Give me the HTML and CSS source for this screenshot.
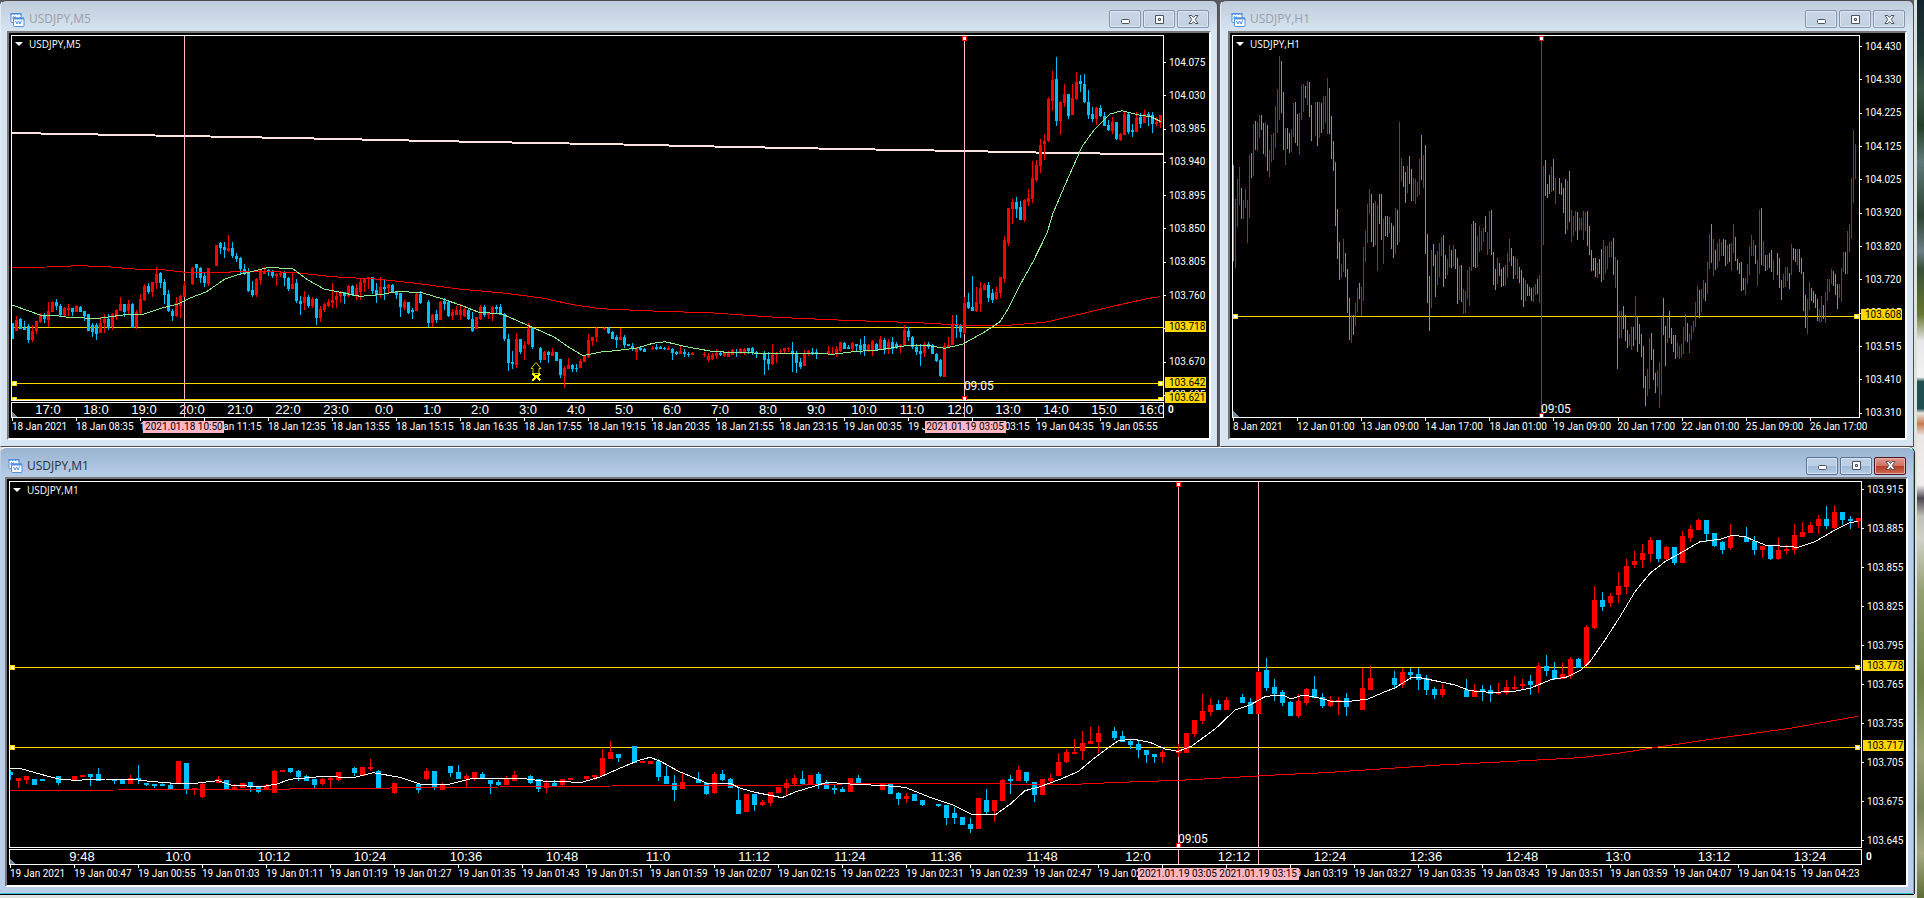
FILE: index.html
```html
<!DOCTYPE html>
<html lang="en">
<head>
<meta charset="utf-8">
<title>USDJPY charts</title>
<link rel="stylesheet" href="styles.css">
</head>
<body>
<svg class="defs" aria-hidden="true">
  <symbol id="icon-chart" viewBox="0 0 15 15">
    <rect x="1" y="1.500" width="10" height="9" rx="1" fill="#fff" stroke="#4d8fe0"/>
    <path d="M0.500 2h11" stroke="#4d8fe0" stroke-width="2" stroke-dasharray="2 1"/>
    <path d="M2.500 6.500l1-2 1 2 1-2" fill="none" stroke="#4d8fe0"/>
    <rect x="3.500" y="6" width="10.500" height="8.500" rx="1" fill="#fff" stroke="#4d8fe0"/>
    <path d="M3.500 6.500h10.500" stroke="#4d8fe0" stroke-width="2"/>
    <path d="M5.500 9l1.500 3 1.500-3 1.500 3 1.500-3.500" fill="none" stroke="#4d8fe0"/>
  </symbol>
  <symbol id="icon-min" viewBox="0 0 13 11">
    <rect x="2.500" y="5.500" width="8" height="4" rx="1" fill="#fff" stroke="#4c5364"/>
  </symbol>
  <symbol id="icon-max" viewBox="0 0 13 11">
    <path fill-rule="evenodd" d="M2.500 1.500h8v8h-8zM5.500 4.500h2v2h-2z" fill="#fff" stroke="#4c5364"/>
  </symbol>
  <symbol id="icon-close" viewBox="0 0 13 11">
    <path d="M2 1.500h2.800l1.700 2 1.700-2h2.800l-2.800 4 2.800 4h-2.800l-1.700-2-1.700 2h-2.800l2.800-4z" fill="#fff" stroke="#4c5364"/>
  </symbol>
</svg>

<main class="desk">
  <div class="row">
    <section class="win">
      <header class="bar">
        <svg class="logo"><use href="#icon-chart"/></svg>
        <h2 class="name">USDJPY,M5</h2>
        <button class="ctl" aria-label="Minimize"><svg><use href="#icon-min"/></svg></button>
        <button class="ctl" aria-label="Maximize"><svg><use href="#icon-max"/></svg></button>
        <button class="ctl" aria-label="Close"><svg><use href="#icon-close"/></svg></button>
      </header>
      <div class="client">
        <div class="plot"><svg class="draw" id="m5"></svg><span class="legend">USDJPY,M5</span><span class="mark" style="left:82.700%">09:05</span></div>
        <div class="prices prices-m5">
          <span>104.075</span><span>104.030</span><span>103.985</span><span>103.940</span><span>103.895</span><span>103.850</span><span>103.805</span><span>103.760</span><span>103.715</span><span>103.670</span><span>103.625</span>
        </div>
        <div class="tags"><b style="top:79.800%">103.718</b><b style="top:95%">103.642</b><b style="top:99.300%">103.621</b></div>
        <div class="sub">
          <div class="hours hours-m5"><span>17:0</span><span>18:0</span><span>19:0</span><span>20:0</span><span>21:0</span><span>22:0</span><span>23:0</span><span>0:0</span><span>1:0</span><span>2:0</span><span>3:0</span><span>4:0</span><span>5:0</span><span>6:0</span><span>7:0</span><span>8:0</span><span>9:0</span><span>10:0</span><span>11:0</span><span>12:0</span><span>13:0</span><span>14:0</span><span>15:0</span><span>16:0</span></div>
          <i class="cut" style="left:14.950%"></i><i class="cut" style="left:82.720%"></i>
        </div>
        <div class="zero">0</div>
        <div class="times">
          <div class="dates dates-m5"><span>18 Jan 2021</span><span>18 Jan 08:35</span><span>18 Jan 09:55</span><span>18 Jan 11:15</span><span>18 Jan 12:35</span><span>18 Jan 13:55</span><span>18 Jan 15:15</span><span>18 Jan 16:35</span><span>18 Jan 17:55</span><span>18 Jan 19:15</span><span>18 Jan 20:35</span><span>18 Jan 21:55</span><span>18 Jan 23:15</span><span>19 Jan 00:35</span><span>19 Jan 01:55</span><span>19 Jan 03:15</span><span>19 Jan 04:35</span><span>19 Jan 05:55</span></div>
          <b class="stamp" style="left:14.950%">2021.01.18 10:50</b><b class="stamp" style="left:82.700%">2021.01.19 03:05</b>
        </div>
      </div>
    </section>

    <section class="win">
      <header class="bar">
        <svg class="logo"><use href="#icon-chart"/></svg>
        <h2 class="name">USDJPY,H1</h2>
        <button class="ctl" aria-label="Minimize"><svg><use href="#icon-min"/></svg></button>
        <button class="ctl" aria-label="Maximize"><svg><use href="#icon-max"/></svg></button>
        <button class="ctl" aria-label="Close"><svg><use href="#icon-close"/></svg></button>
      </header>
      <div class="client single">
        <div class="plot"><svg class="draw" id="h1"></svg><span class="legend">USDJPY,H1</span><span class="mark low" style="left:49.200%">09:05</span></div>
        <div class="prices prices-h1">
          <span>104.430</span><span>104.330</span><span>104.225</span><span>104.125</span><span>104.025</span><span>103.920</span><span>103.820</span><span>103.720</span><span>103.615</span><span>103.515</span><span>103.410</span><span>103.310</span>
        </div>
        <div class="tags"><b style="top:73.200%">103.608</b></div>
        <div class="times">
          <div class="dates dates-h1"><span>8 Jan 2021</span><span>12 Jan 01:00</span><span>13 Jan 09:00</span><span>14 Jan 17:00</span><span>18 Jan 01:00</span><span>19 Jan 09:00</span><span>20 Jan 17:00</span><span>22 Jan 01:00</span><span>25 Jan 09:00</span><span>26 Jan 17:00</span></div>
        </div>
      </div>
    </section>
  </div>

  <section class="win active">
    <header class="bar">
      <svg class="logo"><use href="#icon-chart"/></svg>
      <h2 class="name">USDJPY,M1</h2>
      <button class="ctl" aria-label="Minimize"><svg><use href="#icon-min"/></svg></button>
      <button class="ctl" aria-label="Maximize"><svg><use href="#icon-max"/></svg></button>
      <button class="ctl quit" aria-label="Close"><svg><use href="#icon-close"/></svg></button>
    </header>
    <div class="client">
      <div class="plot"><svg class="draw" id="m1"></svg><span class="legend">USDJPY,M1</span><span class="mark low" style="left:63.100%">09:05</span></div>
      <div class="prices prices-m1">
        <span>103.915</span><span>103.885</span><span>103.855</span><span>103.825</span><span>103.795</span><span>103.765</span><span>103.735</span><span>103.705</span><span>103.675</span><span>103.645</span>
      </div>
      <div class="tags"><b style="top:50.500%">103.778</b><b style="top:72.300%">103.717</b></div>
      <div class="sub">
        <div class="hours hours-m1"><span>9:48</span><span>10:0</span><span>10:12</span><span>10:24</span><span>10:36</span><span>10:48</span><span>11:0</span><span>11:12</span><span>11:24</span><span>11:36</span><span>11:48</span><span>12:0</span><span>12:12</span><span>12:24</span><span>12:36</span><span>12:48</span><span>13:0</span><span>13:12</span><span>13:24</span></div>
        <i class="cut" style="left:63.100%"></i><i class="cut" style="left:67.420%"></i>
      </div>
      <div class="zero">0</div>
      <div class="times">
        <div class="dates dates-m1"><span>19 Jan 2021</span><span>19 Jan 00:47</span><span>19 Jan 00:55</span><span>19 Jan 01:03</span><span>19 Jan 01:11</span><span>19 Jan 01:19</span><span>19 Jan 01:27</span><span>19 Jan 01:35</span><span>19 Jan 01:43</span><span>19 Jan 01:51</span><span>19 Jan 01:59</span><span>19 Jan 02:07</span><span>19 Jan 02:15</span><span>19 Jan 02:23</span><span>19 Jan 02:31</span><span>19 Jan 02:39</span><span>19 Jan 02:47</span><span>19 Jan 02:55</span><span>19 Jan 03:03</span><span>19 Jan 03:11</span><span>19 Jan 03:19</span><span>19 Jan 03:27</span><span>19 Jan 03:35</span><span>19 Jan 03:43</span><span>19 Jan 03:51</span><span>19 Jan 03:59</span><span>19 Jan 04:07</span><span>19 Jan 04:15</span><span>19 Jan 04:23</span></div>
        <b class="stamp" style="left:63.100%">2021.01.19 03:05</b><b class="stamp" style="left:67.420%">2021.01.19 03:15</b>
      </div>
    </div>
  </section>
</main>
<div class="photo"></div>
<script src="charts.js"></script>
</body>
</html>
```

FILE: styles.css
```css
* { box-sizing: border-box; }

body {
  margin: 0;
  min-height: 100vh;
  display: grid;
  grid-template-columns: 1fr 10px;
  background: #dfe3e0;
  font-family: Roboto, "Liberation Sans", sans-serif;
  font-size: 10px;
  overflow: hidden;
}

.defs { position: absolute; width: 0; height: 0; }

.desk {
  display: grid;
  grid-template-rows: 447fr 448fr;
  padding-bottom: 3px;
  min-width: 0;
}

.row {
  display: grid;
  grid-template-columns: 1218fr 694fr;
  gap: 2px;
  background: #5a5a60;
  min-width: 0;
}

/* Windows */
.win {
  display: grid;
  grid-template-rows: 30px 1fr;
  min-width: 0;
  padding: 0 6px 6px;
  border: 1px solid #4b4b50;
  border-left-color: #e4edf6;
  border-radius: 6px 6px 0 0;
  background: linear-gradient(#bfccdb, #d7e4f1 31px) #d7e4f1;
}

.win + .win { padding-left: 7px; }

.win.active {
  grid-template-rows: 29px 1fr;
  padding: 0 5px 6px 4px;
  border-color: #fff #35c3dc #35c3dc #b9cfe9;
  background: linear-gradient(#99b3d0, #b9cfe9 31px);
  box-shadow: 0 1px 0 #000, 1px 0 0 #222;
  margin-bottom: 1px;
}

.bar {
  display: flex;
  align-items: center;
  gap: 2px;
  padding: 6px 2px 0 3px;
}

.logo { width: 15px; height: 15px; }

.name {
  flex: 1;
  margin: 0 0 0 2px;
  font: 12px/16px "Open Sans", sans-serif;
  color: #9aa0a8;
}

.active .name { color: #26303c; }

.ctl {
  width: 32px;
  height: 18px;
  padding: 0;
  display: grid;
  place-items: center;
  border: 1px solid #8595ae;
  border-radius: 2px;
  background: linear-gradient(#c9d6e5, #c2d0e1);
  box-shadow: inset 0 0 0 1px #dbe6f2;
}

.ctl svg { width: 13px; height: 11px; }

.active .ctl {
  border-color: #5c708f;
  background: linear-gradient(#bccfe5 50%, #9fb9d6 50%, #b4cbe4);
  box-shadow: inset 0 0 0 1px #d5e3f2;
}

.active .quit {
  border-color: #4a1520;
  background: linear-gradient(#e0998f, #cf6f62 50%, #b63a26 50%, #cf6a50);
  box-shadow: inset 0 0 0 1px #e8ada3;
}

/* Chart area */
.client {
  display: grid;
  grid-template-columns: minmax(0, 1fr) 45px;
  grid-template-rows: minmax(0, 1fr) 17px 20px;
  padding: 2px 0 0 2px;
  border: 2px solid;
  border-color: #77777a #fff #fff #77777a;
  background: #000;
  color: #fff;
  overflow: hidden;
}

.client.single { grid-template-rows: minmax(0, 1fr) 20px; }

.active .client { grid-template-columns: minmax(0, 1fr) 44px; }

.plot {
  position: relative;
  border: 1px solid #fff;
  overflow: hidden;
}

.draw {
  position: absolute;
  inset: 0;
  width: 100%;
  height: 100%;
}

.legend {
  position: absolute;
  left: 3px;
  top: 0;
  display: flex;
  align-items: center;
  gap: 6px;
  font: 10px/16px "Open Sans", sans-serif;
}

.legend::before {
  content: "";
  border: 4px solid transparent;
  border-top-color: #fff;
  border-bottom: 0;
}

.mark {
  position: absolute;
  bottom: 6px;
  font: 12px/16px Roboto, sans-serif;
}

.mark.low { bottom: 0; }

.prices, .tags {
  grid-column: 2;
  grid-row: 1;
}

.prices {
  display: grid;
  grid-auto-rows: 1fr;
  align-items: center;
  line-height: 12px;
}

.prices-m5 { padding-top: 11px; margin-bottom: -11px; }
.prices-h1 { margin-top: -5px; margin-bottom: -12px; }
.prices-m1 { margin-top: -11px; margin-bottom: -12px; }

.prices span {
  display: flex;
  align-items: center;
  gap: 3px;
}

.prices span::before {
  content: "";
  width: 2px;
  height: 1px;
  background: #fff;
}

.tags { position: relative; }

.tags b {
  position: absolute;
  left: 1px;
  width: 41px;
  margin-top: -6px;
  padding-left: 4px;
  background: #ffd700;
  color: #000;
  font-weight: 400;
  line-height: 11px;
}

.sub {
  position: relative;
  margin-top: 1px;
  border: 1px solid #fff;
  overflow: hidden;
  font: 13px/14px "Liberation Sans", sans-serif;
  background: linear-gradient(45deg, #778899 4px, #000 4px);
}

.hours {
  display: grid;
  grid-auto-flow: column;
  grid-auto-columns: 1fr;
  text-align: center;
}

.hours-m5 { padding-left: 12px; margin-right: -13px; }
.hours-m1 { padding-left: 24px; padding-right: 3px; }

.cut {
  position: absolute;
  top: 0;
  bottom: 0;
  width: 1px;
  background: #ffb6c1;
}

.zero { padding-left: 4px; line-height: 18px; font-weight: 700; }

.times {
  position: relative;
  grid-column: 1 / -1;
  margin-right: 45px;
  padding-left: 1px;
}

.dates {
  display: grid;
  grid-auto-flow: column;
  grid-auto-columns: minmax(0, 1fr);
  line-height: 12px;
  white-space: nowrap;
}

.dates-h1 { margin-right: -14px; }
.dates-m1 { margin-right: -5px; }

.dates span::before {
  content: "";
  display: block;
  width: 1px;
  height: 3px;
  background: #fff;
}

.stamp {
  position: absolute;
  top: 3px;
  width: 81px;
  margin-left: -40px;
  background: #ffb6c1;
  color: #000;
  font-weight: 400;
  line-height: 12px;
  text-align: center;
  white-space: nowrap;
}

/* Strip of wallpaper beside the windows */
.photo {
  margin-left: 3px;
  background: linear-gradient(#12242c 0, #1f3a34 6%, #3d5a4a 10%, #24402a 14%, #5e7a78 18%, #2c4534 24%, #6c7f86 28%, #39503a 30%, #66782e 35%, #e8e8ea 38%, #f2f2f2 42%, #1f4f50 42.500%, #1f4f50 45.500%, #e8e4e0 46%, #c97a50 47.200%, #e9e6e6 48.500%, #f0eeee 54%, #4c4850 55.500%, #bfc0ba 57.500%, #d0d2c8 60%, #93a070 66%, #6f8448 76%, #98a377 84%, #788559 90%, #a4a982 95%, #5d6d34);
}
```

FILE: charts.js
```js
// Vertical values are counted in thirds of a pixel row from the top of the pane's window.
const M5 = "b968,968,1017,1017 r949,960,992,992 b955,957,987,987 b963,985,990,990 b972,978,1020,1029 r975,993,1020,1026 r963,963,993,1002 r939,942,966,968 b939,945,958,970 r906,933,960,980 r903,906,936,936 b897,906,918,930 b912,918,945,948 r921,924,945,948 r912,924,930,948 b924,924,936,949 r915,918,936,936 b918,920,936,936 b933,933,948,963 b942,942,993,993 b969,975,996,1011 b969,975,1002,1020 r951,969,998,998 r942,957,969,1000 b942,957,984,990 r939,942,982,990 r927,929,945,961 r891,912,933,933 b911,911,936,951 r900,912,934,945 b909,912,984,984 r930,936,982,987 r882,897,939,942 r852,858,900,903 b849,857,876,882 r846,846,876,891 r801,822,849,867 b816,819,849,864 b837,845,884,912 b870,881,933,936 b927,933,948,963 r891,909,948,951 r885,888,918,953 r843,855,891,891 - r801,804,852,855 b792,793,804,834 b801,804,833,849 b816,829,849,861 r804,804,852,857 - r735,735,797,797 b726,729,744,763 b726,741,750,774 r705,744,753,755 b726,744,768,774 b759,768,776,786 b771,774,808,824 b791,807,822,825 b804,816,874,876 b843,870,885,891 r834,837,885,891 r807,810,840,855 r801,813,822,822 b807,810,817,828 b809,813,827,834 r819,822,828,858 r812,818,825,831 b813,819,834,858 b831,833,867,873 r819,852,867,867 b837,849,903,909 b888,902,912,945 r873,891,909,930 b885,891,918,924 r891,897,918,924 b894,897,954,975 r918,927,954,966 r909,911,930,936 r897,906,918,921 r849,900,909,924 r876,888,900,924 r872,876,888,909 b876,876,888,912 r855,858,887,890 b854,857,885,888 r852,864,887,900 r837,846,876,900 r834,837,849,875 r831,831,837,867 b831,831,873,882 b849,870,885,909 r832,861,885,894 b840,861,867,900 r851,855,863,879 b852,854,876,879 b873,876,884,897 b879,879,921,951 r900,906,924,930 b906,906,939,943 b924,931,936,958 r876,882,933,933 b873,882,909,912 - b900,906,969,981 r942,945,970,981 b930,942,960,969 r903,906,960,960 b894,903,912,930 b900,906,948,951 r927,936,948,960 r918,930,945,945 r912,930,945,960 r924,927,948,951 b924,930,957,961 b936,957,993,996 r950,952,988,988 r915,921,957,960 b915,921,946,950 r936,939,945,957 r918,920,942,962 b915,921,927,940 b912,921,945,945 b940,943,1018,1022 b1002,1017,1089,1112 b1053,1087,1093,1107 r1000,1017,1096,1103 b1017,1017,1056,1062 r1023,1035,1048,1080 r969,988,1032,1035 b981,984,1042,1046 - b1041,1045,1080,1089 r1053,1056,1079,1080 b1053,1055,1065,1089 r1044,1056,1067,1068 b1056,1057,1083,1083 b1077,1077,1125,1134 r1098,1104,1128,1163 r1074,1095,1106,1106 b1092,1095,1106,1116 b1092,1104,1107,1116 r1077,1083,1104,1104 r1068,1069,1086,1086 r1002,1020,1070,1073 r1011,1011,1023,1037 r982,983,1011,1026 - r982,984,988,990 b982,984,999,1003 b993,996,1017,1017 b1005,1011,1020,1044 r984,1011,1020,1020 b1005,1011,1035,1045 b1032,1032,1038,1038 b1029,1038,1047,1053 r1041,1044,1056,1080 b1038,1044,1049,1053 b1045,1047,1055,1055 - r1038,1044,1047,1050 b1032,1041,1046,1050 b1038,1041,1046,1047 b1042,1043,1047,1050 r1038,1044,1050,1050 b1044,1047,1058,1080 b1053,1056,1062,1064 r1035,1053,1062,1062 b1046,1056,1062,1070 b1056,1063,1066,1071 r1055,1060,1065,1066 - - r1056,1061,1065,1071 r1059,1068,1080,1086 r1059,1065,1077,1080 r1047,1058,1068,1077 b1054,1059,1064,1068 r1056,1058,1068,1071 r1053,1059,1070,1071 r1047,1050,1064,1065 b1046,1055,1057,1070 r1044,1048,1059,1062 r1044,1047,1055,1064 b1043,1045,1053,1063 b1041,1045,1059,1065 b1053,1055,1058,1073 - b1053,1059,1079,1125 b1056,1077,1092,1110 r1032,1065,1092,1095 r1056,1058,1064,1090 r1048,1052,1056,1062 r1043,1045,1054,1058 r1041,1043,1048,1056 b1026,1053,1060,1116 b1053,1060,1089,1119 b1074,1086,1101,1107 r1050,1058,1098,1098 r1049,1052,1062,1068 b1043,1055,1059,1064 b1046,1056,1060,1078 - - r1038,1052,1063,1064 r1041,1058,1064,1065 r1038,1048,1062,1070 r1025,1026,1053,1055 b1026,1028,1048,1048 b1035,1041,1047,1047 r1026,1030,1047,1053 b1031,1033,1037,1052 b1017,1034,1049,1062 b1008,1033,1052,1068 r1032,1036,1053,1056 r1021,1023,1050,1068 b1029,1032,1050,1053 r1008,1017,1047,1047 b1014,1019,1050,1061 r1017,1027,1047,1062 b1011,1027,1047,1062 b1026,1032,1044,1048 r1032,1034,1041,1058 r975,991,1038,1038 b981,992,1010,1022 b1008,1010,1041,1048 b1033,1040,1055,1064 b1032,1053,1062,1098 r1026,1031,1058,1070 b1025,1032,1042,1047 b1032,1035,1062,1062 b1059,1063,1083,1087 b1077,1080,1128,1132 r1029,1038,1132,1132 r1011,1035,1041,1041 r945,972,1035,1035 b945,972,978,1013 b972,978,996,1014 r891,909,999,1003 b879,906,924,927 b828,921,933,933 r861,906,933,936 r846,864,912,936 r849,855,870,870 b846,855,893,906 b867,880,899,909 r861,876,897,900 r831,831,879,894 r708,720,837,849 r624,624,730,738 r597,606,627,672 b591,606,627,654 b603,621,660,660 r597,600,660,666 r567,594,606,618 r483,534,597,609 r480,495,540,546 r417,435,498,519 r402,423,432,480 r291,297,423,426 r213,240,303,333 b171,237,363,378 r303,306,363,405 r252,282,309,321 b282,282,348,357 r252,294,345,345 r216,246,297,300 b225,243,252,276 b222,252,306,309 b270,306,345,357 b321,342,357,366 r321,324,357,375 b315,324,348,351 b336,348,378,378 b360,375,390,393 r351,366,393,402 b366,366,417,420 r399,402,419,423 r334,342,405,405 b339,342,396,402 b372,390,396,411 r336,354,396,396 b339,351,372,384 r330,342,369,369 b336,342,351,378 b336,345,372,399 r351,366,372,378 r345,345,369,384";

const H1 = "b495,783 r597,804 r537,681 r501,615 b564,657 r600,657 r567,624 r600,729 r465,654 b459,534 r372,528 b363,450 r366,453 r345,414 b345,390 b369,462 r366,471 b375,513 r450,531 r405,486 r399,480 r318,444 r267,399 r168,360 b183,339 b276,450 r384,495 b384,447 b399,459 r387,456 r309,411 b306,429 b342,438 r339,465 r255,360 r252,336 b258,294 r243,315 b246,351 b315,423 - r306,408 b306,438 r306,414 b309,399 r288,387 r288,369 r234,402 b264,402 b348,477 b423,513 b486,678 b627,777 b726,840 r792,834 r717,816 b759,831 b807,939 b894,1020 r945,1029 b945,1005 r909,978 r864,936 b849,897 r861,948 r741,903 r693,786 r612,729 r567,642 b582,726 b609,741 r603,735 r615,813 b582,672 b582,720 r657,792 b648,708 b648,711 r651,699 b669,747 b678,774 r624,762 b630,735 r366,726 r474,543 b498,561 b516,609 r498,579 b468,552 b507,603 r534,603 r537,612 r546,591 r477,585 b405,540 r465,564 b435,762 b702,909 b828,993 r750,924 b732,798 b765,891 r753,855 r729,831 r711,768 b705,861 b765,837 r777,825 r735,801 b750,804 r735,798 b747,807 b774,912 r798,900 b795,906 r867,942 r873,939 r810,897 r801,918 r672,813 b663,801 b669,804 r708,801 r678,756 r693,750 r684,726 b648,696 r696,765 r633,747 b630,765 b756,855 b807,870 r774,852 b789,828 b807,861 b801,858 r795,858 r759,834 r717,786 b744,798 b768,837 r771,825 r777,837 b801,849 b810,900 b834,921 r840,903 b852,888 b861,888 b864,903 r861,906 r852,885 b837,882 r825,909 - r498,735 b480,588 b552,594 b525,582 r501,576 b477,573 r534,612 - b534,582 b549,585 b564,639 b537,702 r543,690 b513,666 r630,726 r648,708 r633,693 b636,720 r654,690 r654,690 r633,720 r636,693 b633,738 b678,765 b750,813 b774,813 b774,831 r789,834 b777,822 b747,846 r720,840 r738,819 r738,807 r726,771 r723,771 b714,825 r771,864 b780,1107 r933,1014 r933,1014 b918,987 b945,1023 b990,1044 r1002,1038 r981,1050 b981,1038 r888,1020 b948,1056 b972,1032 b1002,1071 b1038,1164 b1128,1218 r1107,1188 r1014,1167 b999,1080 b1047,1140 b1119,1179 r1110,1161 r1086,1224 r954,1185 b894,1005 b978,1098 r954,1029 b933,1014 b984,1032 b1005,1056 b1005,1077 r1029,1071 r1038,1077 r1032,1071 r981,1062 r942,1023 b969,1026 r1002,1059 r978,1020 r963,996 r906,981 r858,939 b870,954 r867,936 r840,897 b849,903 r786,882 r702,807 b672,789 r717,828 b750,810 r729,804 r717,783 r726,768 b717,768 b720,798 r735,792 b732,786 r729,813 r672,759 b711,783 b777,810 b789,822 b786,873 b834,870 r834,885 r792,852 r741,825 r705,768 r720,768 b735,792 r780,858 r630,822 b624,795 r723,798 b765,813 r765,810 b759,804 b750,816 r780,840 - b759,825 b774,864 b840,900 r822,864 r801,861 r801,843 b819,867 r732,825 b744,780 b747,786 r747,795 b747,816 b774,822 b816,933 b885,984 r897,1002 r846,930 b864,903 b873,909 b882,924 b897,963 r927,966 r888,966 b915,957 r876,969 r837,903 r837,876 r807,852 b813,858 b822,885 b852,927 r852,894 r804,906 r756,816 b756,822 r693,822 r672,756 r534,717 r390,609 r432,537";

const M1 = "b989,996,1005,1020 r1014,1014,1023,1044 r1008,1008,1021,1033 b1017,1017,1035,1035 b1017,1017,1023,1023 - b1008,1008,1029,1035 - r1008,1008,1020,1023 r1005,1005,1011,1011 b1002,1002,1011,1038 b984,1002,1023,1023 - b1017,1017,1023,1032 b1020,1020,1032,1032 r1005,1014,1032,1032 b975,1014,1020,1032 b1029,1029,1035,1038 b1032,1032,1038,1044 b1029,1032,1038,1038 b1026,1035,1047,1047 r963,963,1029,1029 b969,969,1047,1062 r1044,1044,1050,1065 r1030,1032,1071,1074 - r1008,1017,1029,1029 b1020,1020,1050,1050 r1032,1041,1047,1047 r1029,1029,1044,1044 b1026,1026,1038,1056 b1041,1041,1056,1059 r1032,1035,1047,1050 r990,993,1059,1059 r990,990,996,996 b984,984,996,999 b990,993,1011,1023 b1005,1008,1023,1023 b1017,1017,1035,1044 r1014,1017,1032,1035 r1008,1014,1020,1045 r996,996,1020,1023 - b981,984,999,1008 r981,981,1008,1008 r957,981,987,993 b990,993,1047,1047 - r1029,1029,1059,1062 - - b1032,1032,1050,1059 r984,993,1017,1020 b993,993,1044,1050 r1029,1035,1050,1050 b978,978,999,1011 b975,996,1017,1017 r1002,1008,1017,1041 r996,996,1017,1023 b996,1002,1017,1017 b1020,1020,1032,1062 b1020,1026,1035,1038 r1008,1017,1035,1035 r993,1005,1023,1023 - b1005,1008,1029,1032 b1017,1017,1047,1056 r1020,1029,1044,1059 b1020,1029,1038,1038 r1017,1017,1035,1041 r1014,1014,1020,1020 - r1008,1008,1017,1020 r1005,1005,1011,1020 r927,954,1008,1008 r903,936,957,957 b942,942,954,966 - b918,918,969,969 r963,963,969,969 r963,963,972,972 b957,963,1011,1023 b978,1008,1032,1032 b1005,1029,1050,1083 r996,1026,1047,1047 - b996,1017,1029,1029 b1026,1029,1062,1065 r996,1002,1059,1062 b990,1002,1020,1023 b1014,1017,1044,1044 b1041,1080,1122,1122 r1062,1062,1116,1116 b1062,1062,1095,1113 r1080,1086,1095,1098 r1056,1056,1089,1098 r1041,1041,1059,1059 r1017,1029,1044,1068 r1005,1014,1032,1035 b993,1017,1032,1032 r1005,1005,1032,1032 b996,1002,1032,1047 b1020,1029,1047,1047 b1035,1044,1050,1062 b1041,1047,1056,1056 r1014,1014,1056,1056 b1005,1014,1032,1035 - - r1032,1032,1050,1050 b1029,1029,1062,1062 b1056,1059,1077,1095 r1059,1068,1077,1089 b1062,1062,1083,1083 b1080,1080,1095,1098 - b1092,1092,1098,1101 b1095,1095,1134,1155 b1101,1119,1134,1152 b1131,1131,1155,1155 b1134,1152,1167,1179 r1074,1074,1167,1167 b1047,1080,1116,1122 r1080,1080,1113,1146 r1017,1020,1083,1083 b1005,1017,1023,1062 r978,990,1023,1023 b996,996,1023,1029 b1026,1026,1065,1086 r1017,1017,1065,1065 r1002,1014,1023,1032 r939,966,1008,1008 r927,936,966,969 r897,936,942,942 r873,909,933,960 r861,903,912,912 r858,879,906,939 - b861,873,894,900 b873,888,906,906 b897,903,915,927 b903,912,930,954 b930,930,945,969 b942,942,951,969 r930,936,951,969 - r912,930,939,951 r879,879,939,939 r840,840,882,891 r762,813,843,852 r774,795,816,828 b780,792,810,810 r771,780,810,810 - b762,771,789,789 b774,786,822,822 r693,696,822,822 b654,690,744,753 b717,741,762,783 b750,756,789,798 b783,786,828,828 r762,783,828,834 r744,747,789,795 b708,747,774,774 b759,771,798,804 r768,780,798,801 r771,780,786,825 b759,774,801,828 - r684,744,810,810 r678,714,750,750 - - b693,714,735,747 r684,696,735,744 b684,696,705,720 b684,702,720,750 b705,714,750,765 b741,747,765,777 r732,747,765,771 - - b717,750,771,771 r732,750,771,771 b735,747,753,783 b735,750,762,786 r729,756,762,765 r720,741,759,765 r708,741,747,750 r717,732,738,750 b705,723,735,765 r669,678,735,759 b645,678,693,708 b666,690,717,720 r669,702,717,717 r651,657,708,717 b654,657,684,684 r555,561,675,681 r438,480,564,567 b456,480,501,513 r459,468,489,501 r396,438,465,489 r357,378,441,462 r333,363,375,384 r312,339,360,384 r291,300,342,366 b300,300,357,366 r318,321,357,363 b321,321,369,375 r273,288,369,369 r255,267,294,306 r237,240,270,270 b240,240,282,306 b279,279,318,321 b303,306,330,342 r252,288,324,330 - b261,291,306,306 b288,303,330,345 r318,318,330,354 b315,318,357,360 r291,330,357,360 r315,327,333,342 r252,285,330,342 r246,276,291,291 r246,255,279,279 r225,237,258,282 b198,237,258,267 r195,216,264,267 b216,216,240,255 b228,237,243,267 r234,234,243,264";

const NS = "http://www.w3.org/2000/svg";
const RED = "#ff0000", BLUE = "#00bfff", GOLD = "#ffd700", PINK = "#ffb6c1";

function add(svg, tag, attrs) {
  const el = document.createElementNS(NS, tag);
  for (const k in attrs) el.setAttribute(k, attrs[k]);
  svg.appendChild(el);
}
const box = (svg, x, y, w, h, fill) => add(svg, "rect", { x, y, width: w, height: h, fill });

function handle(svg, x, y, color) {
  box(svg, x - 2, y - 2, 5, 5, color);
  box(svg, x - 1, y - 1, 3, 3, "#fff");
}

function curve(svg, stroke, width, text) {
  const points = text.split(" ").map(p => {
    const [x, y] = p.split(",");
    return x + "," + (y / 3).toFixed(1);
  }).join(" ");
  add(svg, "polyline", { points, fill: "none", stroke, "stroke-width": width });
}

function candles(svg, text, x0, step, body) {
  text.split(" ").forEach((bar, i) => {
    if (bar === "-") return;
    const color = bar[0] === "r" ? RED : BLUE;
    const v = bar.slice(1).split(",").map(n => Math.round(n / 3));
    const x = x0 + i * step;
    box(svg, x, v[0], 1, v[v.length - 1] - v[0], color);
    if (body) box(svg, x - (body - 1) / 2, v[1], body, Math.max(1, v[2] - v[1]), color);
  });
}

function pane(id, x, y, w, h) {
  const svg = document.getElementById(id);
  svg.setAttribute("viewBox", [x, y, w, h].join(" "));
  svg.setAttribute("preserveAspectRatio", "none");
  svg.setAttribute("shape-rendering", "crispEdges");
  return svg;
}

// M5
let s = pane("m5", 12, 36, 1151, 364);
curve(s, "#ffe4e1", 2, "12,399 184,408 324,416 432,423 538,429 600,432 737,441 845,447 964,453 1060,459 1163,463");
box(s, 12, 327, 1151, 1, GOLD);
box(s, 12, 383, 1151, 1, GOLD);
box(s, 12, 399, 1151, 1, GOLD);
box(s, 184, 36, 1, 364, PINK);
box(s, 964, 36, 1, 364, PINK);
candles(s, M5, 12, 4, 3);
curve(s, RED, 1, "12,802 47,801 79,797 107,800 134,807 158,808 186,817 221,817 253,814 293,817 332,830 380,838 419,851 459,867 506,880 542,894 573,914 600,926 653,933 714,939 776,952 845,961 918,968 959,975 1012,975 1045,967 1082,941 1114,918 1147,896 1160,890");
curve(s, "#90ee90", 1, "12,915 40,945 59,948 71,953 99,955 130,942 144,942 162,924 178,912 190,894 206,876 225,837 237,825 253,814 269,802 293,807 308,840 324,867 340,877 360,889 380,884 399,874 423,879 443,897 463,918 478,936 502,942 518,963 534,984 554,1011 569,1042 583,1067 601,1056 616,1052 637,1044 653,1030 665,1025 686,1040 714,1055 763,1060 816,1060 833,1063 853,1055 878,1050 906,1037 927,1036 945,1045 963,1032 984,997 1000,965 1008,927 1020,855 1033,785 1047,700 1053,640 1065,555 1082,440 1094,390 1110,342 1122,332 1139,345 1151,350 1161,365");
handle(s, 14, 383, GOLD);
handle(s, 14, 399, GOLD);
handle(s, 1160, 383, GOLD);
handle(s, 1160, 399, GOLD);
handle(s, 964, 38, RED);
handle(s, 964, 398, RED);
add(s, "path", { d: "M536 362.500l-5 6h2v5h6v-5h2z", fill: "none", stroke: "#c8c800", "shape-rendering": "auto" });
add(s, "path", { d: "M532.500 373.500l8 7M540.500 373.500l-8 7M534 376h5", stroke: "#ffff00", "stroke-width": 2 });

// H1
s = pane("h1", 1233, 36, 626, 381);
box(s, 1233, 316, 626, 1, GOLD);
box(s, 1541, 36, 1, 381, RED);
candles(s, H1, 1233, 2, 0);
handle(s, 1235, 316, GOLD);
handle(s, 1856, 316, GOLD);
handle(s, 1541, 38, RED);
handle(s, 1541, 415, RED);
add(s, "path", { d: "M1233 411l6 6h-6z", fill: "#778899" });

// M1
s = pane("m1", 10, 42, 1851, 365);
box(s, 10, 227, 1851, 1, GOLD);
box(s, 10, 307, 1851, 1, GOLD);
box(s, 1178, 42, 1, 365, PINK);
box(s, 1258, 42, 1, 365, PINK);
candles(s, M1, 10, 8, 5);
curve(s, RED, 1, "9,1051 118,1050 120,1048 260,1048 358,1045 500,1041 612,1038 660,1036 790,1036 855,1031 940,1031 1075,1033 1120,1027 1180,1021 1240,1011 1280,1004 1325,998 1400,983 1440,975 1500,966 1580,953 1620,939 1660,920 1725,892 1790,865 1858,829");
curve(s, "#ffffff", 1, "9,985 20,985 37,1000 60,1018 75,1021 105,1017 138,1020 150,1024 173,1030 195,1030 218,1022 232,1036 262,1040 277,1032 290,1018 320,1010 355,1012 373,998 400,1012 420,1032 450,1032 474,1014 500,1017 525,1016 545,1024 582,1027 600,1011 622,982 638,962 650,952 660,963 678,993 708,1031 730,1030 738,1042 752,1055 782,1073 795,1056 815,1038 827,1027 850,1032 885,1037 905,1042 930,1072 952,1094 972,1123 996,1123 1010,1093 1025,1052 1040,1040 1060,1018 1078,995 1092,960 1106,928 1118,903 1132,897 1150,907 1165,927 1178,934 1192,918 1217,862 1235,810 1250,795 1265,770 1275,766 1285,768 1291,777 1303,765 1318,773 1333,785 1352,783 1368,777 1385,755 1395,744 1411,713 1420,713 1440,725 1455,735 1470,752 1490,757 1512,755 1530,745 1552,718 1566,712 1580,692 1590,665 1605,600 1620,530 1635,455 1650,400 1665,365 1680,340 1700,305 1720,298 1732,286 1745,290 1765,315 1780,318 1798,322 1815,305 1832,275 1848,250 1858,243");
for (const y of [227, 307]) {
  handle(s, 12, y, GOLD);
  handle(s, 1857, y, GOLD);
}
handle(s, 1178, 44, RED);
handle(s, 1178, 405, RED);
```
